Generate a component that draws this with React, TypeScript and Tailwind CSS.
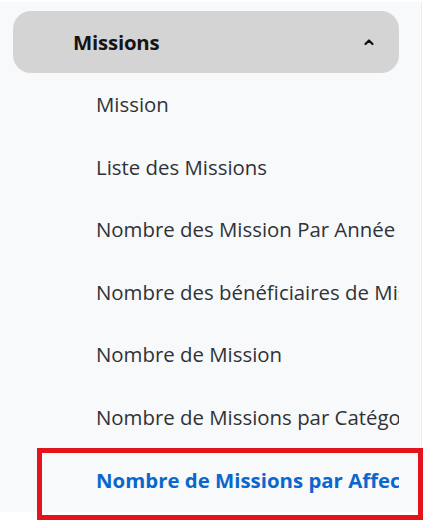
import React from 'react';

const items = [
  'Mission',
  'Liste des Missions',
  'Nombre des Mission Par Année',
  'Nombre des bénéficiaires de Mission',
  'Nombre de Mission',
  'Nombre de Missions par Catégorie',
  'Nombre de Missions par Affectation',
];

const ChevronUp = () => (
  <svg width="12" height="8" viewBox="0 0 12 8" fill="none">
    <path d="M2.5 6 L6 2.5 L9.5 6" stroke="#111" strokeWidth="2.2" strokeLinecap="round" strokeLinejoin="round" />
  </svg>
);

const App: React.FC = () => {
  const active = items.length - 1;
  return (
    <div className="relative w-[434px] h-[528px] bg-white overflow-hidden" style={{ fontFamily: '"Open Sans", "Noto Sans", sans-serif' }}>
      <aside className="mt-[2px] w-[422px] h-[510px] bg-[#f8f9fa] border-r border-[#ebedf0] pt-[9px] pl-[13px]">
        <button className="w-[386px] h-[62px] rounded-[18px] bg-[#d4d4d4] flex items-center justify-between pl-[60px] pr-[24px]">
          <span className="text-[20.4px] font-bold text-[#151515] tracking-[-0.2px]">Missions</span>
          <ChevronUp />
        </button>
        <ul className="w-[386px] overflow-hidden">
          {items.map((label, i) => (
            <li
              key={label}
              className={
                i === active
                  ? 'h-[62.6px] flex items-center pl-[83px] whitespace-nowrap text-[20.4px] font-bold text-[#0b67cd]'
                  : 'h-[62.6px] flex items-center pl-[83px] whitespace-nowrap text-[20.4px] text-[#2f3237]'
              }
            >
              {label}
            </li>
          ))}
        </ul>
      </aside>
      {/* selection outline */}
      <div className="absolute left-[37px] top-[448px] w-[386px] h-[72px] border-[5px] border-[#e3141b] pointer-events-none" />
    </div>
  );
};

export default App;
